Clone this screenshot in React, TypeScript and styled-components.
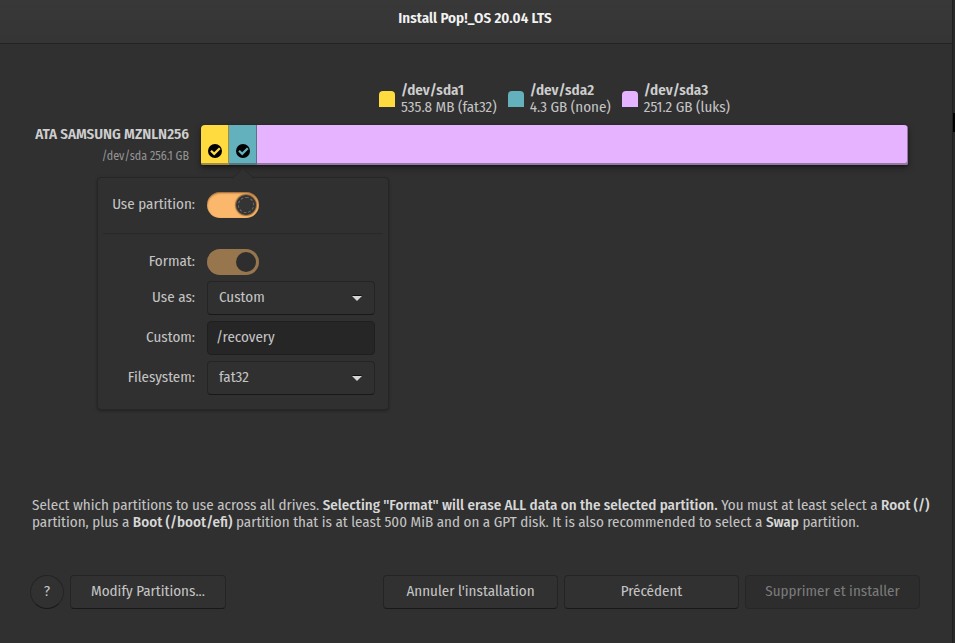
import React, { useState } from "react";
import styled, { createGlobalStyle } from "styled-components";

const GlobalStyle = createGlobalStyle`
  *, *::before, *::after { box-sizing: border-box; }
  body {
    margin: 0;
    background: #303030;
    color: #c4c4c4;
    font-family: "Fira Sans Condensed", "Open Sans", sans-serif;
    font-size: 15px;
    line-height: 17px;
  }
  button, input, select { font: inherit; color: inherit; margin: 0; }
  strong { font-weight: 600; color: #cecece; }
  p { margin: 0; }
`;

const Screen = styled.div`
  display: flex;
  min-height: 100vh;
`;

const Window = styled.main`
  flex: 1;
  min-width: 0;
  display: flex;
  flex-direction: column;
`;

const DesktopEdge = styled.div`
  flex: 0 0 3px;
  display: flex;
  flex-direction: column;
  padding-top: 113px;
  background: #292929;
  border-left: 1px solid #202020;

  &::before {
    content: "";
    height: 19px;
    background: #000;
  }
`;

const TitleBar = styled.header`
  display: flex;
  justify-content: center;
  padding: 10px 18px 16px 16px;
  background: linear-gradient(#383838, #353535);
  border-bottom: 1px solid #232323;
  color: #f2f2f2;
`;

const Title = styled.h1`
  margin: 0;
  font-weight: 600;
  font-size: 15px;
`;

const Disks = styled.section`
  flex: 1;
  display: grid;
  grid-template-columns: 157px 1fr;
  grid-template-rows: auto auto;
  align-content: start;
  column-gap: 12px;
  row-gap: 9px;
  padding: 38px 44px 0 32px;
`;

const Legend = styled.ul`
  grid-column: 2;
  display: flex;
  justify-content: center;
  gap: 11px;
  margin: 0;
  padding: 0;
  list-style: none;
`;

const LegendItem = styled.li`
  display: flex;
  align-items: center;
  gap: 6px;
`;

const Swatch = styled.span<{ $color: string }>`
  width: 16px;
  height: 16px;
  border-radius: 4px 4px 0 0;
  background: ${(p) => p.$color};
`;

const LegendText = styled.div`
  display: flex;
  flex-direction: column;
`;

const DiskName = styled.div`
  display: flex;
  flex-direction: column;
  align-items: flex-end;
  gap: 4px;
  padding-top: 1px;
  white-space: nowrap;
`;

const DiskDevice = styled.span`
  font-size: 12px;
  line-height: 18px;
  color: #949494;
`;

const Bar = styled.div`
  display: flex;
  height: 40px;
  border-radius: 4px 4px 2px 2px;
  box-shadow: 0 3px 6px rgba(0, 0, 0, 0.35), 0 1px 3px rgba(0, 0, 0, 0.3);
`;

const Slot = styled.div<{ $wide?: boolean }>`
  position: relative;
  flex: ${(p) => (p.$wide ? "1" : "0 0 28px")};
  display: flex;
`;

const Partition = styled.button<{ $color: string; $first?: boolean; $last?: boolean }>`
  flex: 1;
  display: flex;
  align-items: flex-end;
  justify-content: center;
  padding: 0 0 6px;
  border: 0;
  border-radius: ${(p) => (p.$first ? "4px 0 0 2px" : p.$last ? "0 4px 2px 0" : "0")};
  background: ${(p) => p.$color};
  box-shadow: inset -1px -2px rgba(70, 60, 70, 0.5);
`;

const Popover = styled.form`
  position: absolute;
  z-index: 1;
  top: 52px;
  left: 50%;
  width: 292px;
  transform: translateX(-50%);
  padding: 14px 13px 14px 5px;
  display: flex;
  flex-direction: column;
  background: #303030;
  border: 1px solid #262626;
  border-radius: 4px;
  box-shadow: 0 1px 3px rgba(0, 0, 0, 0.3);
`;

const Arrow = styled.svg`
  position: absolute;
  top: -10px;
  left: 50%;
  transform: translateX(-50%);
`;

const Rule = styled.hr`
  align-self: stretch;
  height: 1px;
  margin: 15px -8px 15px 0;
  border: 0;
  background: #282828;
`;

const Fields = styled.div`
  display: flex;
  flex-direction: column;
  gap: 6px;
`;

const Field = styled.div`
  display: grid;
  grid-template-columns: 92px 1fr;
  column-gap: 12px;
  align-items: center;
`;

const FieldLabel = styled.label`
  text-align: right;
  white-space: nowrap;
  padding-bottom: 2px;
`;

const Switch = styled.input`
  appearance: none;
  width: 52px;
  height: 26px;
  padding: 3px;
  border-radius: 13px;
  background: #242424;
  box-shadow: inset 0 1px 2px rgba(70, 35, 0, 0.6);
  display: flex;

  &::before {
    content: "";
    width: 20px;
    height: 20px;
    border-radius: 50%;
    background: #343434;
    outline: 1px dashed #707070;
    outline-offset: -3px;
    box-shadow: 0 0 1px 1px rgba(50, 30, 10, 0.5);
  }
  &:checked { justify-content: flex-end; background: #fbb86c; }
  &:disabled { background: #97764e; box-shadow: none; }
  &:disabled::before { background: #2e2e2e; outline: none; box-shadow: none; }
`;

const SelectBox = styled.div`
  display: grid;
  align-items: center;

  > * { grid-area: 1 / 1; }
  > svg { justify-self: end; margin-right: 12px; pointer-events: none; }
`;

const Select = styled.select`
  appearance: none;
  width: 100%;
  height: 34px;
  padding: 0 32px 2px 11px;
  border: 1px solid #242424;
  border-bottom-color: #181818;
  border-radius: 4px;
  background: #303030;
`;

const TextInput = styled.input`
  width: 100%;
  height: 34px;
  padding: 0 8px 2px;
  border: 1px solid #1f1f1f;
  border-radius: 4px;
  background: #262626;
`;

const Hint = styled.p`
  padding: 0 20px 0 32px;

  strong { font-weight: 500; color: #d8d8d8; }
`;

const Footer = styled.footer`
  display: flex;
  gap: 6px;
  padding: 44px 32px 34px 30px;
`;

const Button = styled.button<{ $round?: boolean; $wide?: boolean }>`
  flex: 0 0 ${(p) => (p.$round ? "34px" : p.$wide ? "175px" : "156px")};
  height: 34px;
  padding: 0 0 2px;
  border: 1px solid #242424;
  border-bottom-color: #181818;
  border-radius: ${(p) => (p.$round ? "50%" : "4px")};
  background: #313131;
  white-space: nowrap;

  &:disabled { color: #7b7b7b; background: #2d2d2d; border-color: #262626; }
`;

const Spacer = styled.span`
  flex: 1;
`;

const Check = () => (
  <svg width="16" height="16" viewBox="0 0 16 16" aria-hidden="true">
    <path
      fillRule="evenodd"
      fill="#000"
      d="M8 1a7 7 0 1 0 0 14A7 7 0 0 0 8 1Zm4 3.500 1.600 1.500-6.400 6.500-4-3.900 1.600-1.600 2.400 2.300Z"
    />
  </svg>
);

const Caret = () => (
  <svg width="12" height="8" viewBox="0 0 12 8" aria-hidden="true">
    <path d="M1 1h10L6 6Z" fill="#111" />
    <path d="M1 2h10L6 7Z" fill="#d6d6d6" />
  </svg>
);

const partitions = [
  { device: "/dev/sda1", info: "535.8 MB (fat32)", color: "#ffdb40", used: true },
  { device: "/dev/sda2", info: "4.3 GB (none)", color: "#63b1bc", used: true },
  { device: "/dev/sda3", info: "251.2 GB (luks)", color: "#e5b3ff", used: false },
];

function PartitionPopover() {
  const [use, setUse] = useState(true);
  const [mount, setMount] = useState("/recovery");
  return (
    <Popover>
      <Arrow width="22" height="11" viewBox="0 0 22 11" aria-hidden="true">
        <path d="M0 11 11 0l11 11Z" fill="#303030" />
        <path d="M0 10.500 11 0.500l11 10" fill="none" stroke="#282828" />
      </Arrow>
      <Field>
        <FieldLabel htmlFor="use">Use partition:</FieldLabel>
        <Switch id="use" type="checkbox" checked={use} onChange={() => setUse(!use)} />
      </Field>
      <Rule />
      <Fields>
        <Field>
          <FieldLabel htmlFor="format">Format:</FieldLabel>
          <Switch id="format" type="checkbox" checked disabled readOnly />
        </Field>
        <Field>
          <FieldLabel htmlFor="use-as">Use as:</FieldLabel>
          <SelectBox>
            <Select id="use-as" defaultValue="Custom">
              <option>Custom</option>
            </Select>
            <Caret />
          </SelectBox>
        </Field>
        <Field>
          <FieldLabel htmlFor="mount">Custom:</FieldLabel>
          <TextInput id="mount" value={mount} onChange={(e) => setMount(e.target.value)} />
        </Field>
        <Field>
          <FieldLabel htmlFor="filesystem">Filesystem:</FieldLabel>
          <SelectBox>
            <Select id="filesystem" defaultValue="fat32">
              <option>fat32</option>
            </Select>
            <Caret />
          </SelectBox>
        </Field>
      </Fields>
    </Popover>
  );
}

export default function App() {
  return (
    <Screen>
      <GlobalStyle />
      <Window>
        <TitleBar>
          <Title>Install Pop!_OS 20.04 LTS</Title>
        </TitleBar>
        <Disks>
          <Legend>
            {partitions.map((p) => (
              <LegendItem key={p.device}>
                <Swatch $color={p.color} />
                <LegendText>
                  <strong>{p.device}</strong>
                  <span>{p.info}</span>
                </LegendText>
              </LegendItem>
            ))}
          </Legend>
          <DiskName>
            <strong>ATA SAMSUNG MZNLN256</strong>
            <DiskDevice>/dev/sda 256.1 GB</DiskDevice>
          </DiskName>
          <Bar>
            {partitions.map((p, i) => (
              <Slot key={p.device} $wide={i === 2}>
                <Partition
                  type="button"
                  aria-label={p.device}
                  $color={p.color}
                  $first={i === 0}
                  $last={i === 2}
                >
                  {p.used && <Check />}
                </Partition>
                {i === 1 && <PartitionPopover />}
              </Slot>
            ))}
          </Bar>
        </Disks>
        <Hint>
          Select which partitions to use across all drives.{" "}
          <strong>Selecting "Format" will erase ALL data on the selected partition.</strong> You
          must at least select a <strong>Root (/)</strong> partition, plus a{" "}
          <strong>Boot (/boot/efi)</strong> partition that is at least 500 MiB and on a GPT disk.
          It is also recommended to select a <strong>Swap</strong> partition.
        </Hint>
        <Footer>
          <Button type="button" $round aria-label="Help">?</Button>
          <Button type="button">Modify Partitions...</Button>
          <Spacer />
          <Button type="button" $wide>Annuler l'installation</Button>
          <Button type="button" $wide>Précédent</Button>
          <Button type="button" $wide disabled>Supprimer et installer</Button>
        </Footer>
      </Window>
      <DesktopEdge />
    </Screen>
  );
}
